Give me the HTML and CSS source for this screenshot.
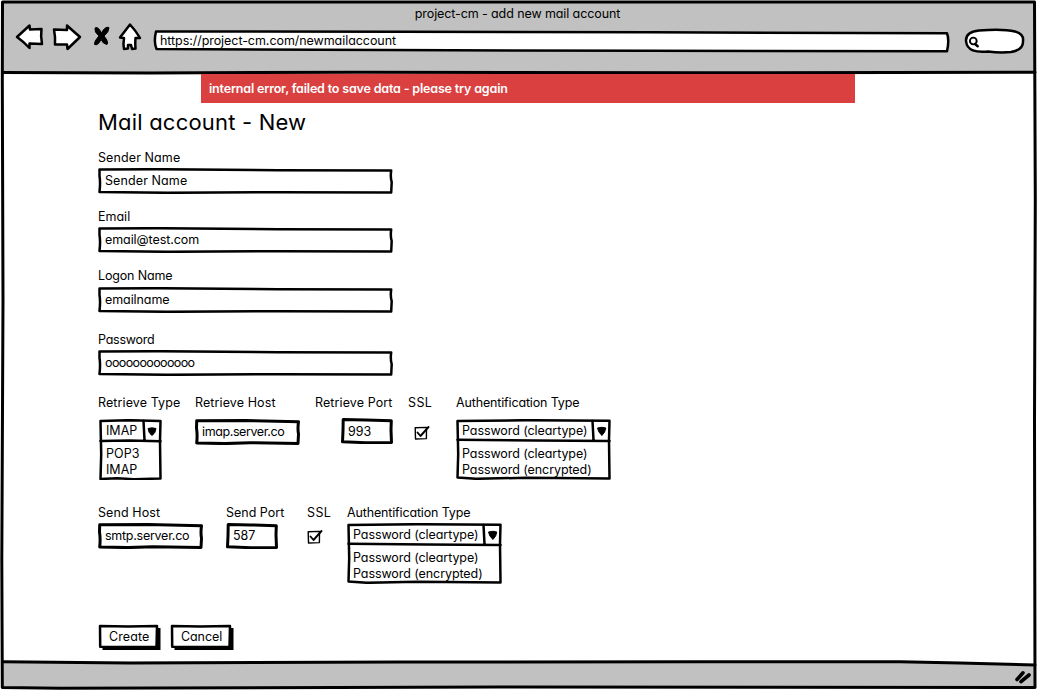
FILE: index.html
```
<!DOCTYPE html>
<html lang="en">
<head>
<meta charset="utf-8">
<title>project-cm - add new mail account</title>
<link rel="stylesheet" href="styles.css">
</head>
<body>
<svg class="defs" width="0" height="0">
  <symbol id="wide" viewBox="0 0 295 26"><path class="ink" d="M1.500 1.500L60 1.200 180 2.200 293.200 2.500Q292.200 9 293.700 14L293.200 24.500 180 24.200 70 24.800 1.500 24Q2.600 14 1.500 8Z"/></symbol>
  <symbol id="host" viewBox="0 0 105 26"><path class="ink thick" d="M1.700 1.700L50 1.500 103.500 2.800Q102.500 10 103.500 15L103 24.500 55 23.700 30 24.600 1.700 24Q2.600 16 1.500 9Z"/></symbol>
  <symbol id="port" viewBox="0 0 52 26"><path class="ink thick" d="M2.200 1.500L25 1.900 50.300 2.700 50 12 50.500 24.400 25 24.700 1.500 23.800 2 13Z"/></symbol>
  <symbol id="check" viewBox="0 0 16 16"><path class="ink thin" d="M1.200 2.700L12.500 2.400 12.400 13.600 1.500 14Z"/><path class="ink tick" d="M3.500 7.500L6.500 11 14.500 2"/></symbol>
  <symbol id="auth" viewBox="0 0 155 61"><path class="ink" d="M1.500 2L70 1.200 153.500 1.800 153 21 153.500 59.500 70 58.800 20 59.800 1.500 58.500 2.200 35Z"/><path class="ink" d="M1.500 20.700L80 21.500 153.500 22M136.500 2L137.500 21"/><path class="solid arrow" d="M141.500 9Q146 7.600 149.800 9Q149.500 13 145.900 16.500Q142 13 141.500 9Z"/></symbol>
</svg>
<div class="window">
  <svg class="frame" width="1037" height="690">
    <path fill="#c1c1c1" d="M3 2H1035V73H3ZM3 662L900 661 1035 665V687H3Z"/>
    <path class="ink thick" d="M2.500 2H1034.500L1035.300 200 1034.500 420 1035 687.500 500 687 60 688.200 2.300 687.500 1.800 560 3 300 2.300 80Z"/>
    <path class="ink thick" d="M3 72.400L150 73 360 72.200 700 72.800 1035 72.300M3 661.800L130 663 400 662 700 661.800 900 661.700 960 663 1035 665"/>
    <path class="ink grip" d="M1017 679.500L1023 672.800M1021 681.700L1029 675"/>
  </svg>
  <div class="page">
    <header class="chrome">
      <div class="title"><span>project-cm - add new mail account</span></div>
      <div class="toolbar">
        <svg width="130" height="36" viewBox="12 20 130 36">
          <path class="ink paper" d="M17 37L29.500 25.500 30 29.500 41.500 29Q40.500 36 42 44L29.500 43.500V48Q24 42 17 37Z"/>
          <path class="ink paper" d="M54 29.500L67 30V25.500Q73 31 80 37L67.500 49 67 44.500 55 44.500Q55.500 37 54 29.500Z"/>
          <path class="solid arrow" d="M95 28Q98 26 101.500 33Q105 26 109 27.500Q109 32 104 36Q109 42 107 44.500Q103 44 101 39.500Q98 46 94.500 44.500Q94 41 99 36Q94 32 95 28Z"/>
          <path class="ink paper" d="M130 24.500L120 37.500 124 38Q123 44 124 49L128 48.500V45H131L132 49 135.500 48.500Q135 43 135.500 38L140 38Q136 31 130 24.500Z"/>
        </svg>
        <div class="stack url">
          <svg width="797" height="24" viewBox="153 29 797 24"><path class="ink paper" d="M156 31.500L400 31.700 650 32.300 947 33.300Q949.500 40 947 51.300L650 50.700 450 50.300 156.500 49Q153.500 42 156 31.500Z"/></svg>
          <span class="txt">https://project-cm.com/newmailaccount</span>
        </div>
        <svg width="62" height="26" viewBox="963 28 62 26"><path class="ink paper" d="M966 41Q965.500 32 979 30.500Q1003 28.500 1015 31.500Q1024 34 1023 41Q1023.500 50 1011 52Q1000 53 988 51.500C976 52.500 967 51 966 41Z"/><circle class="ink tick" cx="973.300" cy="41" r="3.400"/><path class="ink" d="M975 44L977.700 46.300"/></svg>
      </div>
    </header>
    <div class="alert">internal error, failed to save data - please try again</div>
    <main>
      <h1>Mail account - New</h1>
      <div class="field"><label class="ls-wide">Sender Name</label><div class="stack input"><svg width="295" height="26"><use href="#wide"/></svg><span class="txt ls-wide">Sender Name</span></div></div>
      <div class="field"><label>Email</label><div class="stack input"><svg width="295" height="26"><use href="#wide"/></svg><span class="txt ls-snug">email@test.com</span></div></div>
      <div class="field logon"><label class="ls-tight">Logon Name</label><div class="stack input"><svg width="295" height="26"><use href="#wide"/></svg><span class="txt ls-snug">emailname</span></div></div>
      <div class="field"><label class="ls-tighter">Password</label><div class="stack input"><svg width="295" height="26"><use href="#wide"/></svg><span class="txt mask">ooooooooooooo</span></div></div>
      <div class="row retrieve">
        <div><label class="ls-wide">Retrieve Type</label><div class="stack select type"><svg width="63" height="61"><path class="ink" d="M1.500 2L30 1.200 61.500 2 61 22 61.500 59.500 35 60.200 18 59.200 1.500 60 2.200 35Z"/><path class="ink" d="M1.500 22L30 21.500 61.500 22.200M44.500 2L45.500 21"/><path class="solid arrow" d="M49 9.500Q53 8.200 57 9.500Q56.500 14 53 16.500Q49.500 14 49 9.500Z"/></svg><div class="options type-options"><span>IMAP</span><span class="ls-wide">POP3</span><span>IMAP</span></div></div></div>
        <div><label class="ls-wide">Retrieve Host</label><div class="stack input host"><svg width="105" height="26"><use href="#host"/></svg><span class="txt ls-imap">imap.server.co</span></div></div>
        <div><label class="ls-wide">Retrieve Port</label><div class="stack input port"><svg width="52" height="26"><use href="#port"/></svg><span class="txt">993</span></div></div>
        <div><label class="ssl">SSL</label><svg class="check" width="16" height="16"><use href="#check"/></svg></div>
        <div><label class="ls-tight">Authentification Type</label><div class="stack select"><svg width="155" height="61"><use href="#auth"/></svg><div class="options ls-snug"><span>Password (cleartype)</span><span>Password (cleartype)</span><span>Password (encrypted)</span></div></div></div>
      </div>
      <div class="row send">
        <div><label class="ls-wide">Send Host</label><div class="stack input"><svg width="105" height="26"><use href="#host"/></svg><span class="txt ls-tighter">smtp.server.co</span></div></div>
        <div><label>Send Port</label><div class="stack input"><svg width="52" height="26"><use href="#port"/></svg><span class="txt">587</span></div></div>
        <div><label class="ssl">SSL</label><svg class="check" width="16" height="16"><use href="#check"/></svg></div>
        <div><label class="ls-tight">Authentification Type</label><div class="stack select"><svg width="155" height="61"><use href="#auth"/></svg><div class="options ls-snug"><span>Password (cleartype)</span><span>Password (cleartype)</span><span>Password (encrypted)</span></div></div></div>
      </div>
      <div class="buttons">
        <button><span class="stack"><svg width="64" height="28"><path class="solid" d="M4.500 4H62.500V26H4.500Z"/><path class="ink paper" d="M2 2L30 2.500 59 2 58.500 23 2.200 22.800Z"/></svg><span class="txt ls-wide">Create</span></span></button>
        <button><span class="stack"><svg width="64" height="28"><path class="solid" d="M4.500 4H63.500V26H4.500Z"/><path class="ink paper" d="M2 2L30 2.500 60 2 59.500 23 2.200 22.800Z"/></svg><span class="txt ls-snug">Cancel</span></span></button>
      </div>
    </main>
  </div>
</div>
</body>
</html>
```
FILE: styles.css
```
* { box-sizing: border-box; }
body { margin: 0; background: #fff; color: #000; font: 400 12.5px/16px Inter, "Open Sans", sans-serif; font-feature-settings: "cv11"; overflow: hidden; }
.defs { display: block; height: 0; }
svg { display: block; }

/* Hand-drawn strokes */
.ink { fill: none; stroke: #000; stroke-width: 2.5; stroke-linejoin: round; stroke-linecap: round; }
.paper { fill: #fff; }
.thick { stroke-width: 3; }
.thin { stroke-width: 1.4; }
.tick { stroke-width: 1.9; }
.grip { stroke-width: 3.6; }
.solid { fill: #000; }
.arrow { stroke: #000; stroke-width: 1; stroke-linejoin: round; }

/* Letter fitting */
.ls-wide { letter-spacing: .1px; }
.ls-snug { letter-spacing: -.08px; }
.ls-tight { letter-spacing: -.15px; }
.ls-tighter { letter-spacing: -.26px; }
.ls-imap { letter-spacing: -.4px; }
.mask { letter-spacing: -.62px; }
.ssl { letter-spacing: .4px; }

/* Browser window */
.window { display: grid; width: 1037px; height: 690px; }
.window > * { grid-area: 1 / 1; }
.page { z-index: 1; }
.stack { display: grid; justify-content: start; align-content: start; }
.stack > * { grid-area: 1 / 1; }
.chrome { height: 74px; }
.title { height: 20px; padding: 6px 2px 0 0; text-align: center; letter-spacing: -.1px; }
.title, label, h1, .alert, .options span, .txt { white-space: nowrap; }
.toolbar { display: flex; align-items: flex-start; padding-left: 12px; }
.url { margin: 9px 13px 0 11px; }
.url .txt { padding: 4px 0 0 7px; letter-spacing: -.06px; }
.toolbar > svg:last-child { margin-top: 8px; }
.alert { width: 654px; height: 29px; margin-left: 201px; padding: 7px 8px; background: #da4040; color: #fff; font-weight: 600; letter-spacing: -.17px; }

/* Form */
main { padding-left: 98px; }
h1 { margin: 0; height: 46px; padding-top: 5px; font-size: 22px; line-height: 28px; font-weight: 400; letter-spacing: .2px; }
label { display: block; height: 16px; margin-bottom: 3px; line-height: 18px; }
.input .txt { padding: 5px 0 0 7px; }
.field { height: 59px; }
.logon { height: 64px; }
.logon .input { margin-top: 4px; }
.row { display: grid; justify-content: start; }
.retrieve { grid-template-columns: 97px 120px 93px 48px 155px; height: 110px; margin-top: 4px; }
.send { grid-template-columns: 128px 81px 40px 155px; height: 120px; }
.retrieve .input, .retrieve .select { margin-top: 9px; }
.retrieve .host { margin-top: 9px; }
.retrieve .port { margin-top: 8px; margin-left: 26px; }
.retrieve .port .txt { padding-top: 6px; }
.retrieve .type { margin-left: 1px; }
.options { display: flex; flex-direction: column; padding: 4px 0 0 6px; }
.type-options { padding-left: 7px; }
.options span:first-child { margin-bottom: 7px; }
.check { margin: 15px 0 0 6px; }
.send .check { margin: 9px 0 0; }
.buttons { display: flex; gap: 8px; }
button { padding: 0; border: 0; background: none; color: inherit; font: inherit; font-feature-settings: inherit; text-align: left; }
button .txt { padding: 5px 0 0 11px; }
```
